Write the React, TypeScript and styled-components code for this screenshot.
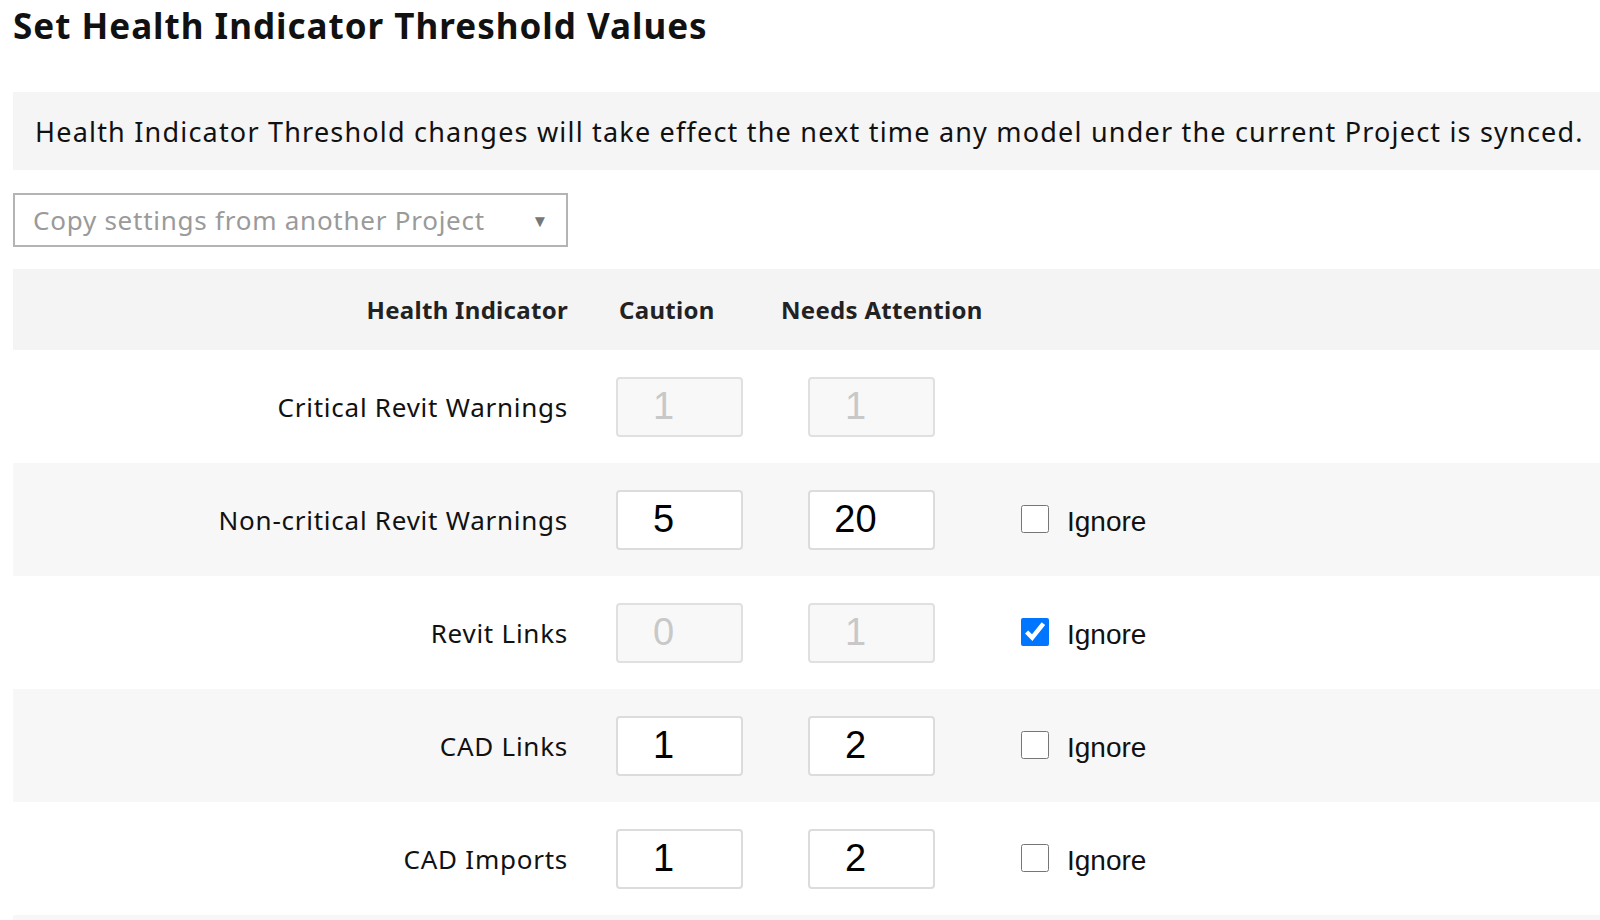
import React from "react";
import styled, { createGlobalStyle } from "styled-components";

const GlobalStyle = createGlobalStyle`
  html, body { margin: 0; padding: 0; background: #ffffff; }
  body { font-family: "Noto Sans", "Liberation Sans", sans-serif; color: #111; overflow: hidden; }
`;

const Page = styled.div`
  padding: 4px 0 0 13px;
  width: 1700px;
`;

const Title = styled.h1`
  margin: 0;
  font-family: "Noto Sans", "Liberation Sans", sans-serif;
  font-weight: 700;
  font-size: 35px;
  line-height: 44px;
  color: #111;
  letter-spacing: 1px;
`;

const InfoBar = styled.div`
  margin-top: 44px;
  height: 78px;
  display: flex;
  align-items: center;
  padding-left: 22px;
  background: #f5f5f5;
  font-size: 27px;
  letter-spacing: 1.2px;
  white-space: nowrap;
  color: #111;
`;

const SelectBox = styled.div`
  margin-top: 23px;
  box-sizing: border-box;
  width: 555px;
  height: 54px;
  border: 2px solid #b4b4b4;
  display: flex;
  align-items: center;
  justify-content: space-between;
  padding: 0 17px 0 18px;
  font-size: 26px;
  letter-spacing: 0.75px;
  color: #9a9a9a;
  background: #fff;
`;

const Arrow = styled.span`
  font-size: 17px;
  color: #777;
`;

const Table = styled.div`
  margin-top: 22px;
`;

const HeaderRow = styled.div`
  height: 81px;
  background: #f4f4f4;
  display: flex;
  align-items: center;
  font-weight: 700;
  font-size: 24px;
  letter-spacing: 0.3px;
  color: #222;
`;

const HeadCell = styled.div<{ $w: number; $right?: boolean }>`
  box-sizing: border-box;
  width: ${(p) => p.$w}px;
  text-align: ${(p) => (p.$right ? "right" : "left")};
  white-space: nowrap;
`;

const Row = styled.div<{ $shaded: boolean }>`
  height: 113px;
  background: ${(p) => (p.$shaded ? "#f7f7f7" : "#ffffff")};
  display: grid;
  grid-template-columns: 555px 127px 127px auto;
  column-gap: 48px;
  align-items: center;
`;

const Label = styled.div`
  text-align: right;
  font-size: 26px;
  letter-spacing: 0.75px;
  color: #111;
  white-space: nowrap;
`;

const NumInput = styled.input<{ $second?: boolean }>`
  box-sizing: border-box;
  width: 127px;
  height: 60px;
  margin-left: ${(p) => (p.$second ? "17px" : "0")};
  border: 2px solid #dcdcdc;
  border-radius: 4px;
  background: #fff;
  font-family: "Liberation Sans", Arial, sans-serif;
  font-size: 38px;
  color: #000;
  text-align: center;
  padding: 0 32px 0 0;
  outline: none;
  &:disabled {
    background: #f8f8f8;
    color: #c8c8c8;
    border-color: #e0e0e0;
  }
`;

const IgnoreWrap = styled.label`
  display: flex;
  align-items: center;
  gap: 18px;
  margin-left: 55px;
  font-family: "Liberation Sans", Arial, sans-serif;
  font-size: 28px;
  color: #111;
`;

const IgnoreText = styled.span`
  padding-top: 4px;
`;

const Check = styled.input`
  width: 28px;
  height: 28px;
  margin: 0 0 2px 0;
`;

type Item = { label: string; c: string; n: string; disabled: boolean; ignore: boolean | null };

const items: Item[] = [
  { label: "Critical Revit Warnings", c: "1", n: "1", disabled: true, ignore: null },
  { label: "Non-critical Revit Warnings", c: "5", n: "20", disabled: false, ignore: false },
  { label: "Revit Links", c: "0", n: "1", disabled: true, ignore: true },
  { label: "CAD Links", c: "1", n: "2", disabled: false, ignore: false },
  { label: "CAD Imports", c: "1", n: "2", disabled: false, ignore: false },
];

export default function App() {
  return (
    <>
      <GlobalStyle />
      <Page>
        <Title>Set Health Indicator Threshold Values</Title>
        <InfoBar>
          Health Indicator Threshold changes will take effect the next time any model under the current Project is synced.
        </InfoBar>
        <SelectBox>
          <span>Copy settings from another Project</span>
          <Arrow>▼</Arrow>
        </SelectBox>
        <Table>
          <HeaderRow>
            <HeadCell $w={555} $right>Health Indicator</HeadCell>
            <HeadCell $w={51} />
            <HeadCell $w={162}>Caution</HeadCell>
            <HeadCell $w={250}>Needs Attention</HeadCell>
          </HeaderRow>
          {items.map((it, i) => (
            <Row key={it.label} $shaded={i % 2 === 1}>
              <Label>{it.label}</Label>
              <NumInput defaultValue={it.c} disabled={it.disabled} />
              <NumInput $second defaultValue={it.n} disabled={it.disabled} />
              {it.ignore === null ? (
                <span />
              ) : (
                <IgnoreWrap>
                  <Check type="checkbox" defaultChecked={it.ignore} />
                  <IgnoreText>Ignore</IgnoreText>
                </IgnoreWrap>
              )}
            </Row>
          ))}
          <Row $shaded>
            <span />
          </Row>
        </Table>
      </Page>
    </>
  );
}
